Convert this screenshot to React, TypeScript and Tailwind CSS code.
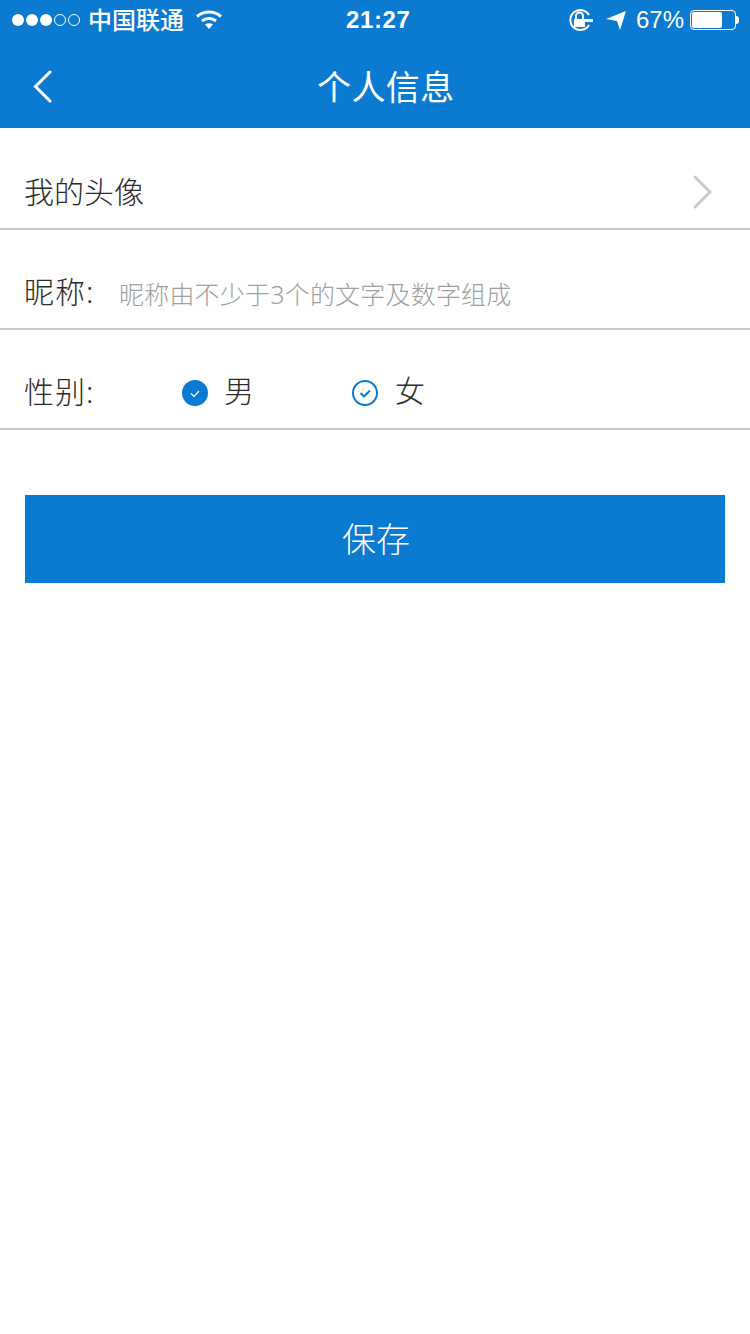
import React from 'react';

const font = '[font-family:"Noto_Sans","Noto_Sans_CJK_SC",sans-serif]';

function Check({ filled }: { filled?: boolean }) {
  return (
    <svg width="28" height="28" viewBox="0 0 28 28" className="shrink-0">
      {filled ? (
        <>
          <circle cx="14" cy="14" r="13" fill="#0b7ad1" />
          <path d="M10 14.5l3 3 5-5.5" fill="none" stroke="#fff" strokeWidth="1.2" />
        </>
      ) : (
        <>
          <circle cx="14" cy="14" r="12" fill="none" stroke="#0b7ad1" strokeWidth="2" />
          <path d="M9.5 14l3.5 3.500 6-6" fill="none" stroke="#0b7ad1" strokeWidth="2" />
        </>
      )}
    </svg>
  );
}

function StatusBar() {
  return (
    <div className="h-10 flex items-center justify-between pl-3 pr-[11px] text-white relative">
      <div className="flex items-center">
        <div className="flex items-center gap-[2px]">
          <span className="w-3 h-3 rounded-full bg-white" />
          <span className="w-3 h-3 rounded-full bg-white" />
          <span className="w-3 h-3 rounded-full bg-white" />
          <span className="w-3 h-3 rounded-full border border-white" />
          <span className="w-3 h-3 rounded-full border border-white" />
        </div>
        <span className="ml-[8px] text-[24px] leading-none font-medium">中国联通</span>
        <svg width="28" height="20" viewBox="0 0 28 20" className="ml-[11px]" fill="none" stroke="#fff" strokeWidth="3">
          <path d="M2 6.500c7-6 17-6 24 0" />
          <path d="M7 11c4-3.400 10-3.400 14 0" />
          <path d="M14 19l-4-4.500c2.200-1.600 5.800-1.600 8 0z" fill="#fff" stroke="none" />
        </svg>
      </div>
      <span className="absolute left-[346px] top-[5px] text-[24px] leading-[30px] font-semibold tracking-[0.6px] [font-family:'Liberation_Sans',sans-serif]">21:27</span>
      <div className="flex items-center">
        <svg width="26" height="26" viewBox="0 0 26 26" fill="none" stroke="#fff" strokeWidth="2">
          <path d="M22 8a10 10 0 1 0 0 10" />
          <rect x="7" y="12" width="11" height="8" fill="#fff" stroke="none" />
          <path d="M9 12V9a3.500 3.500 0 0 1 7 0v3" />
          <path d="M18 12h8v3h-8z" fill="#fff" stroke="none" />
        </svg>
        <svg width="22" height="22" viewBox="0 0 22 22" className="ml-[12px]">
          <path d="M1 10L21 2l-6 19-3-9z" fill="#fff" />
        </svg>
        <span className="ml-[9px] text-[24px] leading-none [font-family:'Liberation_Sans',sans-serif]">67%</span>
        <div className="ml-[6px] flex items-center">
          <div className="w-[46px] h-[20px] rounded-[4px] border border-white p-[1px]">
            <div className="h-full w-[30px] rounded-[2px] bg-white" />
          </div>
          <div className="w-[3px] h-[8px] bg-white rounded-r-sm" />
        </div>
      </div>
    </div>
  );
}

export default function App() {
  return (
    <div className={`min-h-[1334px] bg-white ${font}`}>
      <div className="bg-[#0b7ad1]">
        <StatusBar />
        <div className="h-[88px] flex items-center relative">
          <svg width="20" height="34" viewBox="0 0 20 34" className="ml-[33px] mt-[6px]" fill="none" stroke="#fff" strokeWidth="3" strokeLinecap="round">
            <path d="M17 2L2.500 16.500 17 31" />
          </svg>
          <div className="absolute left-[317px] top-[23px] text-[34px] leading-[48px] tracking-[0.4px] text-white">个人信息</div>
        </div>
      </div>

      <div className="h-[102px] pt-[36px] pl-[25px] pr-[38px] flex items-start justify-between border-b-2 border-[#c8c8c8]">
        <span className="-ml-px text-[30px] leading-[56px] font-light text-[#2c2c2c]">我的头像</span>
        <svg width="20" height="34" viewBox="0 0 20 34" className="mt-[11px]" fill="none" stroke="#c8c8c8" strokeWidth="3" strokeLinecap="round">
          <path d="M3 2l15 15L3 32" />
        </svg>
      </div>

      <div className="h-[100px] pt-[34px] pl-[25px] flex items-start border-b-2 border-[#c8c8c8]">
        <span className="-ml-px w-[95px] text-[30px] leading-[56px] font-light tracking-[1px] text-[#2c2c2c]">昵称:</span>
        <span className="mt-[2px] text-[25px] leading-[56px] font-light tracking-[0.2px] text-[#a0a0a0]">昵称由不少于3个的文字及数字组成</span>
      </div>

      <div className="h-[100px] pt-[34px] pl-[25px] flex items-start border-b-2 border-[#c8c8c8] text-[#2c2c2c]">
        <span className="-ml-px w-[157px] text-[30px] leading-[56px] font-light tracking-[1px]">性别:</span>
        <div className="w-[170px] flex items-center h-[56px] pt-[2px]">
          <Check filled />
          <span className="ml-[15px] text-[30px] leading-[56px] font-light -mt-[4px]">男</span>
        </div>
        <div className="flex items-center h-[56px] pt-[2px]">
          <Check />
          <span className="ml-[16px] text-[30px] leading-[56px] font-light -mt-[4px]">女</span>
        </div>
      </div>

      <div className="px-[25px] pt-[65px]">
        <button className="w-full h-[88px] bg-[#0b7ad1] text-white text-[34px] font-light pl-[2px]">保存</button>
      </div>
    </div>
  );
}
